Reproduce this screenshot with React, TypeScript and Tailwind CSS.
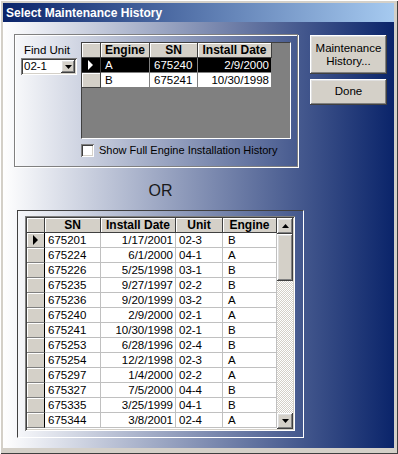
import React from "react";

const raised =
  "shadow-[inset_-1px_-1px_0_#404040,inset_1px_1px_0_#ffffff,inset_-2px_-2px_0_#808080,inset_2px_2px_0_#dfdfdf]";
const sunken =
  "shadow-[inset_1px_1px_0_#808080,inset_-1px_-1px_0_#ffffff,inset_2px_2px_0_#404040,inset_-2px_-2px_0_#d4d0c8]";

const history = [
  ["675201", "1/17/2001", "02-3", "B"],
  ["675224", "6/1/2000", "04-1", "A"],
  ["675226", "5/25/1998", "03-1", "B"],
  ["675235", "9/27/1997", "02-2", "B"],
  ["675236", "9/20/1999", "03-2", "A"],
  ["675240", "2/9/2000", "02-1", "A"],
  ["675241", "10/30/1998", "02-1", "B"],
  ["675253", "6/28/1996", "02-4", "B"],
  ["675254", "12/2/1998", "02-3", "A"],
  ["675297", "1/4/2000", "02-2", "A"],
  ["675327", "7/5/2000", "04-4", "B"],
  ["675335", "3/25/1999", "04-1", "B"],
  ["675344", "3/8/2001", "02-4", "A"],
];

const Arrow = ({ color = "#000" }: { color?: string }) => (
  <svg width="6" height="10" viewBox="0 0 6 10">
    <polygon points="0,0 5,5 0,10" fill={color} />
  </svg>
);

const Head = ({ w, children }: { w: string; children?: React.ReactNode }) => (
  <div
    className={`${w} h-[15px] shrink-0 bg-[#d4d0c8] border-r border-b border-[#404040] shadow-[inset_1px_1px_0_#ffffff] font-bold text-[12px] text-center leading-[14px] whitespace-nowrap`}
  >
    {children}
  </div>
);

const App = () => {
  return (
    <div className="w-[398px] h-[454px] bg-[#d4d0c8] p-[3px] pr-[4px] pb-[6px] flex flex-col font-['Liberation_Sans',Arial,sans-serif] text-[11px] text-black shadow-[inset_1px_1px_0_#ffffff,inset_-1px_-1px_0_#404040]">
      <div className="h-[19px] shrink-0 flex items-center pl-[3px] bg-[linear-gradient(to_right,#0a246a,#a6caf0)] text-white font-bold text-[12px]">
        Select Maintenance History
      </div>

      <div className="flex-1 flex bg-[linear-gradient(to_right,#ffffff,#0a246a)]">
        <div className="w-[301px] shrink-0 pl-[11px] pt-[12px]">
          {/* unit group */}
          <div className="w-[284px] h-[133px] border border-[#808080] shadow-[inset_1px_1px_0_#ffffff,1px_1px_0_#ffffff] flex pt-[7px] pl-[6px]">
            <div className="w-[56px] shrink-0 flex flex-col">
              <div className="mt-[2px] pl-[3px] leading-[13px] text-[11.5px]">Find Unit</div>
              <div className={`mt-px h-[17px] bg-white ${sunken} flex items-center justify-between pl-[3px] pr-[2px]`}>
                <span className="leading-[13px] text-[11.5px]">02-1</span>
                <div className={`w-[14px] h-[13px] bg-[#d4d0c8] ${raised} flex items-center justify-center`}>
                  <svg width="7" height="4" viewBox="0 0 7 4">
                    <polygon points="0,0 7,0 3.5,4" fill="#000" />
                  </svg>
                </div>
              </div>
            </div>

            <div className="ml-[4px] flex flex-col">
              <div className="w-[210px] h-[97px] bg-[#808080] border-t border-l border-[#404040] border-b-white border-r-white border-b border-r">
                <div className="flex">
                  <Head w="w-[19px]" />
                  <Head w="w-[49px]">Engine</Head>
                  <Head w="w-[48px]">SN</Head>
                  <Head w="w-[74px]">Install Date</Head>
                </div>
                <div className="flex h-[15px] leading-[14px] text-[11.5px]">
                  <div className="w-[19px] bg-[#000] border-r border-b border-[#404040] flex items-center justify-center">
                    <Arrow color="#ffffff" />
                  </div>
                  <div className="w-[49px] bg-black text-white border-r border-b border-[#808080] pl-[4px]">A</div>
                  <div className="w-[48px] bg-black text-white border-r border-b border-[#808080] pl-[4px]">675240</div>
                  <div className="w-[74px] bg-black text-white border-r border-b border-[#808080] pr-[2px] text-right">2/9/2000</div>
                </div>
                <div className="flex h-[15px] leading-[14px] text-[11.5px]">
                  <div className="w-[19px] bg-[#d4d0c8] border-r border-b border-[#404040] shadow-[inset_1px_1px_0_#ffffff]" />
                  <div className="w-[49px] bg-white border-r border-b border-[#808080] pl-[4px]">B</div>
                  <div className="w-[48px] bg-white border-r border-b border-[#808080] pl-[4px]">675241</div>
                  <div className="w-[74px] bg-white border-r border-b border-[#808080] pr-[2px] text-right">10/30/1998</div>
                </div>
              </div>
              <div className="mt-[5px] flex items-center">
                <div className={`w-[13px] h-[13px] bg-white ${sunken}`} />
                <span className="ml-[5px] leading-[13px]">Show Full Engine Installation History</span>
              </div>
            </div>
          </div>

          <div className="ml-[3px] w-[287px] mt-[15px] text-center text-[16px] leading-[18px] text-[#1a1a1a]">OR</div>

          {/* all installs */}
          <div className="ml-[3px] mt-[10px] w-[287px] h-[228px] border border-t-[#404040] border-l-[#404040] border-b-white border-r-white pl-[7px] pt-[5px]">
            <div className={`w-[270px] h-[215px] p-[2px] bg-white ${sunken}`}>
              <div className="flex h-[211px] overflow-hidden">
                <div className="w-[250px] flex flex-col">
                  <div className="flex">
                    <Head w="w-[18px]" />
                    <Head w="w-[56px]">SN</Head>
                    <Head w="w-[75px]">Install Date</Head>
                    <Head w="w-[47px]">Unit</Head>
                    <Head w="w-[54px]">Engine</Head>
                  </div>
                  {history.map((r, i) => (
                    <div key={r[0]} className="flex h-[15px] shrink-0 leading-[14px] text-[11.5px]">
                      <div className="w-[18px] bg-[#d4d0c8] border-r border-r-black border-b border-b-[#808080] shadow-[inset_1px_1px_0_#ffffff] flex items-center justify-center">
                        {i === 0 && <Arrow />}
                      </div>
                      <div className="w-[56px] border-r border-b border-[#c0c0c0] pl-[3px]">{r[0]}</div>
                      <div className="w-[75px] border-r border-b border-[#c0c0c0] pr-[2px] text-right">{r[1]}</div>
                      <div className="w-[47px] border-r border-b border-[#c0c0c0] pl-[3px]">{r[2]}</div>
                      <div className="w-[54px] border-r border-b border-[#c0c0c0] pl-[5px]">{r[3]}</div>
                    </div>
                  ))}
                </div>
                <div className="w-[16px] flex flex-col">
                  <div className={`h-[16px] bg-[#d4d0c8] ${raised} flex items-center justify-center`}>
                    <svg width="7" height="4" viewBox="0 0 7 4">
                      <polygon points="3.5,0 7,4 0,4" fill="#000" />
                    </svg>
                  </div>
                  <div className={`h-[47px] bg-[#d4d0c8] ${raised}`} />
                  <div className="flex-1 bg-[repeating-conic-gradient(#d4d0c8_0%_25%,#ffffff_0%_50%)] bg-[length:2px_2px]" />
                  <div className={`h-[16px] bg-[#d4d0c8] ${raised} flex items-center justify-center`}>
                    <svg width="7" height="4" viewBox="0 0 7 4">
                      <polygon points="0,0 7,0 3.5,4" fill="#000" />
                    </svg>
                  </div>
                </div>
              </div>
            </div>
          </div>
        </div>

        <div className="ml-[6px] pt-[13px] flex flex-col gap-[5px]">
          <div className={`w-[77px] h-[39px] bg-[#d4d0c8] ${raised} flex items-center justify-center text-center leading-[13px] text-[11.5px]`}>
            Maintenance
            <br />
            History...
          </div>
          <div className={`w-[77px] h-[26px] bg-[#d4d0c8] ${raised} flex items-center justify-center text-[11.5px]`}>Done</div>
        </div>
      </div>
    </div>
  );
};

export default App;
